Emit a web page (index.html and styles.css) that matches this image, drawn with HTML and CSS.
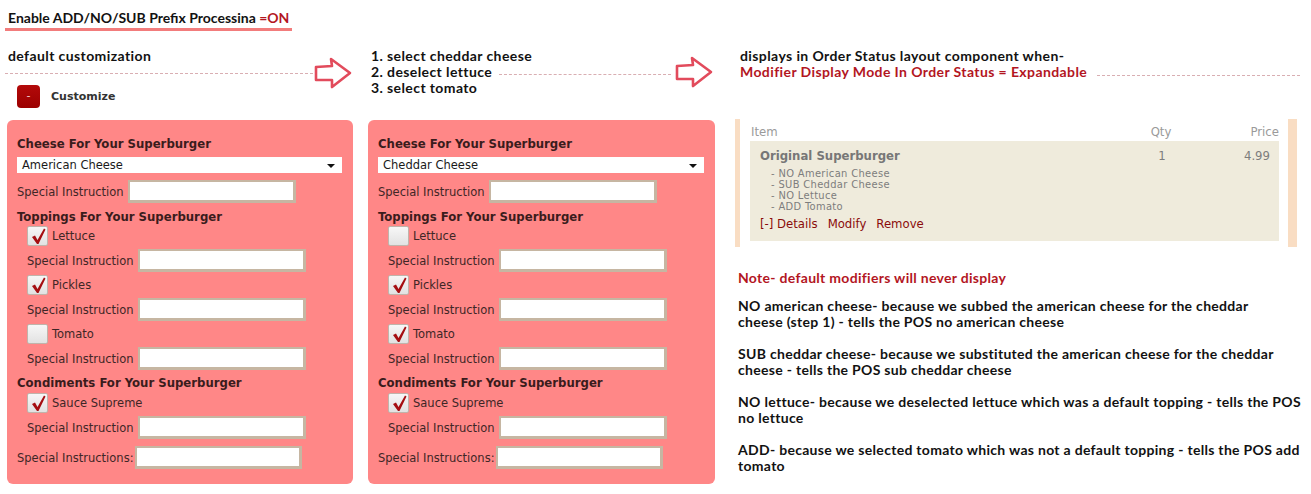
FILE: index.html
```html
<!DOCTYPE html>
<html>
<head>
<meta charset="utf-8">
<title>ADD/NO/SUB Prefix Processing</title>
<link rel="stylesheet" href="styles.css">
</head>
<body>
<div class="top">Enable ADD/NO/SUB Prefix Processina <span class="on">=ON</span></div>
<div class="cols">
  <div class="intro intro1">
    <div class="left">
      <div class="gtext">default customization</div>
      <div class="dash d1"></div>
      <div class="cust"><span class="btn">-</span><span class="custlbl">Customize</span></div>
    </div>
    <svg class="arrow a1" width="38" height="32" viewBox="0 0 38 32"><path d="M2 10 L18 9 L17 2 L36 16 L18 30 L18 23 L2 23 Z" fill="none" stroke="#e24b5c" stroke-width="2.6" stroke-linejoin="round"/></svg>
  </div>
  <div class="intro intro2 gtext">
    <div>1. select cheddar cheese</div>
    <div class="row2"><span>2. deselect lettuce</span><span class="dash d2"></span><svg class="arrow" width="38" height="32" viewBox="0 0 38 32"><path d="M2 10 L18 9 L17 2 L36 16 L18 30 L18 23 L2 23 Z" fill="none" stroke="#e24b5c" stroke-width="2.6" stroke-linejoin="round"/></svg></div>
    <div>3. select tomato</div>
  </div>
  <div class="intro intro3 gtext">
    <div>displays in Order Status layout component when-</div>
    <div class="row2"><span class="red">Modifier Display Mode In Order Status = Expandable</span><span class="dash d3"></span></div>
  </div>

  <div class="panel">
    <div class="h">Cheese For Your Superburger</div>
    <div class="sel">American Cheese</div>
    <div class="si"><span class="lbl">Special Instruction</span><span class="inp"></span></div>
    <div class="h h2">Toppings For Your Superburger</div>
    <div class="item first">
      <div class="cbrow"><span class="cb"><svg width="16" height="18" viewBox="0 0 16 18"><path d="M2 10 L5 8.5 L7.5 13 L14 1.5 L15.5 2.5 L8.5 17 L7 17 Z" fill="#a50f12"/></svg></span>Lettuce</div>
      <div class="si"><span class="lbl">Special Instruction</span><span class="inp"></span></div>
    </div>
    <div class="item">
      <div class="cbrow"><span class="cb"><svg width="16" height="18" viewBox="0 0 16 18"><path d="M2 10 L5 8.5 L7.5 13 L14 1.5 L15.5 2.5 L8.5 17 L7 17 Z" fill="#a50f12"/></svg></span>Pickles</div>
      <div class="si"><span class="lbl">Special Instruction</span><span class="inp"></span></div>
    </div>
    <div class="item">
      <div class="cbrow"><span class="cb"></span>Tomato</div>
      <div class="si"><span class="lbl">Special Instruction</span><span class="inp"></span></div>
    </div>
    <div class="h h3">Condiments For Your Superburger</div>
    <div class="item first2">
      <div class="cbrow"><span class="cb"><svg width="16" height="18" viewBox="0 0 16 18"><path d="M2 10 L5 8.5 L7.5 13 L14 1.5 L15.5 2.5 L8.5 17 L7 17 Z" fill="#a50f12"/></svg></span>Sauce Supreme</div>
      <div class="si"><span class="lbl">Special Instruction</span><span class="inp"></span></div>
    </div>
    <div class="si last"><span class="lbl lbl2">Special Instructions:</span><span class="inp inp2"></span></div>
  </div>

  <div class="panel">
    <div class="h">Cheese For Your Superburger</div>
    <div class="sel">Cheddar Cheese</div>
    <div class="si"><span class="lbl">Special Instruction</span><span class="inp"></span></div>
    <div class="h h2">Toppings For Your Superburger</div>
    <div class="item first">
      <div class="cbrow"><span class="cb"></span>Lettuce</div>
      <div class="si"><span class="lbl">Special Instruction</span><span class="inp"></span></div>
    </div>
    <div class="item">
      <div class="cbrow"><span class="cb"><svg width="16" height="18" viewBox="0 0 16 18"><path d="M2 10 L5 8.5 L7.5 13 L14 1.5 L15.5 2.5 L8.5 17 L7 17 Z" fill="#a50f12"/></svg></span>Pickles</div>
      <div class="si"><span class="lbl">Special Instruction</span><span class="inp"></span></div>
    </div>
    <div class="item">
      <div class="cbrow"><span class="cb"><svg width="16" height="18" viewBox="0 0 16 18"><path d="M2 10 L5 8.5 L7.5 13 L14 1.5 L15.5 2.5 L8.5 17 L7 17 Z" fill="#a50f12"/></svg></span>Tomato</div>
      <div class="si"><span class="lbl">Special Instruction</span><span class="inp"></span></div>
    </div>
    <div class="h h3">Condiments For Your Superburger</div>
    <div class="item first2">
      <div class="cbrow"><span class="cb"><svg width="16" height="18" viewBox="0 0 16 18"><path d="M2 10 L5 8.5 L7.5 13 L14 1.5 L15.5 2.5 L8.5 17 L7 17 Z" fill="#a50f12"/></svg></span>Sauce Supreme</div>
      <div class="si"><span class="lbl">Special Instruction</span><span class="inp"></span></div>
    </div>
    <div class="si last"><span class="lbl lbl2">Special Instructions:</span><span class="inp inp2"></span></div>
  </div>

  <div class="right">
    <div class="status">
      <div class="shead"><span>Item</span><span class="qty">Qty</span><span class="price">Price</span></div>
      <div class="sbox">
        <div class="srow"><span class="name">Original Superburger</span><span class="qty">1</span><span class="price">4.99</span></div>
        <div class="mods">
          <div>- NO American Cheese</div>
          <div>- SUB Cheddar Cheese</div>
          <div>- NO Lettuce</div>
          <div>- ADD Tomato</div>
        </div>
        <div class="links"><span>[-] Details</span><span>Modify</span><span>Remove</span></div>
      </div>
    </div>
    <div class="notes gtext">
      <p class="red">Note- default modifiers will never display</p>
      <p>NO american cheese- because we subbed the american cheese for the cheddar<br>cheese (step 1) - tells the POS no american cheese</p>
      <p>SUB cheddar cheese- because we substituted the american cheese for the cheddar<br>cheese - tells the POS sub cheddar cheese</p>
      <p>NO lettuce- because we deselected lettuce which was a default topping - tells the POS<br>no lettuce</p>
      <p>ADD- because we selected tomato which was not a default topping - tells the POS add<br>tomato</p>
    </div>
  </div>
</div>
</body>
</html>
```

FILE: styles.css
```css
body {
  margin: 0;
  background: #ffffff;
  font-family: "DejaVu Sans Condensed", "DejaVu Sans", sans-serif;
  color: #111;
}

.gtext {
  font-family: Lato, "Liberation Sans", sans-serif;
  font-weight: bold;
  font-size: 14px;
  letter-spacing: 0.4px;
  line-height: 16px;
  color: #121212;
}

.top {
  display: inline-block;
  margin-left: 5px;
  padding: 10px 3px 2px 3px;
  border-bottom: 3px solid #f27c7c;
  font-family: Lato, "Liberation Sans", sans-serif;
  font-weight: bold;
  font-size: 14px;
  line-height: 16px;
  color: #121212;
}

.on, .red {
  color: #b3161f;
}

.cols {
  display: grid;
  grid-template-columns: 346px 347px 1fr;
  grid-template-rows: 89px auto;
  column-gap: 15px;
  padding-left: 7px;
}

.intro1 {
  display: flex;
  align-items: flex-start;
}

.intro1 .left {
  flex: 1;
  padding-top: 17px;
}

.intro1 .left > .gtext {
  margin-left: 1px;
}

.dash {
  border-top: 1px dashed #d9aeb2;
  height: 0;
}

.d1 {
  margin-top: 9px;
  margin-left: -2px;
  margin-right: 1px;
}

.arrow {
  flex: none;
  display: block;
}

.a1 {
  margin-top: 26px;
  margin-right: 1px;
}

.cust {
  display: flex;
  align-items: center;
  margin-top: 11px;
  margin-left: 10px;
}

.btn {
  width: 23px;
  height: 23px;
  border-radius: 4px;
  background: linear-gradient(#b30a0a, #9c0000);
  color: #f3d0d0;
  font-family: "DejaVu Sans", sans-serif;
  font-size: 11px;
  line-height: 21px;
  text-align: center;
}

.custlbl {
  margin-left: 11px;
  font-family: "DejaVu Sans", sans-serif;
  font-weight: bold;
  font-size: 11px;
  color: #333;
}

.intro2 {
  padding-top: 17px;
  padding-left: 3px;
}

.row2 {
  display: flex;
  align-items: center;
  height: 16px;
}

.d2 {
  flex: 1;
  margin: 4px 4px 0 7px;
}

.intro2 .arrow {
  margin-right: 2px;
}

.intro3 {
  padding-top: 17px;
  padding-left: 10px;
}

.d3 {
  flex: 1;
  margin: 6px 11px 0 10px;
}

/* panels */
.panel {
  align-self: start;
  background: #ff8787;
  border-radius: 6px;
  padding: 16px 11px 15px 10px;
  font-family: "DejaVu Sans", sans-serif;
  font-size: 11.5px;
  line-height: 14px;
  color: #3e2626;
}

.h {
  font-family: "DejaVu Sans Condensed", "DejaVu Sans", sans-serif;
  font-weight: bold;
  font-size: 13px;
  line-height: 16px;
  color: #3a1c1c;
}

.h2 {
  margin-top: 6px;
}

.h3 {
  margin-top: 5px;
}

.sel {
  position: relative;
  margin-top: 5px;
  height: 16px;
  background: #fff;
  padding-left: 5px;
  line-height: 16px;
  color: #1a1a1a;
}

.sel::after {
  content: "";
  position: absolute;
  right: 7px;
  top: 7px;
  border-left: 4px solid transparent;
  border-right: 4px solid transparent;
  border-top: 4px solid #111;
}

.si {
  display: flex;
  align-items: center;
  margin-top: 7px;
}

.lbl {
  width: 106px;
  margin-right: 5px;
  white-space: nowrap;
}

.lbl2 {
  width: 113px;
}

.inp {
  width: 168px;
  height: 23px;
  box-sizing: border-box;
  background: #fff;
  border-style: solid;
  border-color: #c6b6a2;
  border-width: 2px 3px 3px 2px;
}

.inp2 {
  width: 167px;
}

.item {
  margin-left: 10px;
  margin-top: 3px;
}

.item.first {
  margin-top: 1px;
}

.item.first2 {
  margin-top: 2px;
}

.item .si {
  margin-top: 3px;
}

.si.last {
  margin-top: 7px;
}

.cbrow {
  display: flex;
  align-items: center;
  height: 20px;
}

.cb {
  width: 19px;
  height: 18px;
  margin-right: 4px;
  border: 1px solid #c0b4ab;
  border-radius: 2px;
  background: linear-gradient(#f7f7f7, #e2e2e2);
  display: flex;
  align-items: center;
  justify-content: center;
}

/* right column */
.right {
  align-self: start;
  margin-left: 5px;
  margin-top: -1px;
  margin-right: 14px;
}

.status {
  border-left: 5px solid #f9ddc3;
  border-right: 9px solid #f9ddc3;
  padding: 0 9px 6px 10px;
}

.shead {
  display: grid;
  grid-template-columns: 1fr 46px 95px;
  font-size: 13px;
  padding-top: 4px;
  line-height: 18px;
  color: #9a9a9a;
  padding-left: 1px;
}

.qty {
  text-align: center;
}

.price {
  text-align: right;
}

.sbox {
  background: #efebdc;
  padding: 7px 9px 9px 10px;
  color: #7d7d7d;
}

.srow {
  display: grid;
  grid-template-columns: 1fr 46px 85px;
  font-size: 13px;
  line-height: 16px;
}

.name {
  font-weight: bold;
  color: #777;
}

.mods {
  margin-top: 4px;
  margin-left: 11px;
  font-size: 11px;
  letter-spacing: 0.35px;
  line-height: 11px;
  color: #7d7d7d;
}

.links {
  margin-top: 4px;
  font-size: 13px;
  line-height: 16px;
  color: #8a0b0b;
  display: flex;
  gap: 10px;
}

.notes {
  padding-left: 3px;
  margin-top: 23px;
  margin-right: -14px;
  white-space: nowrap;
  letter-spacing: 0.3px;
}

.notes p {
  margin: 0 0 16px 0;
}

.notes p:last-child {
  margin-bottom: 0;
}

.notes p.red {
  margin-bottom: 12px;
}
```
